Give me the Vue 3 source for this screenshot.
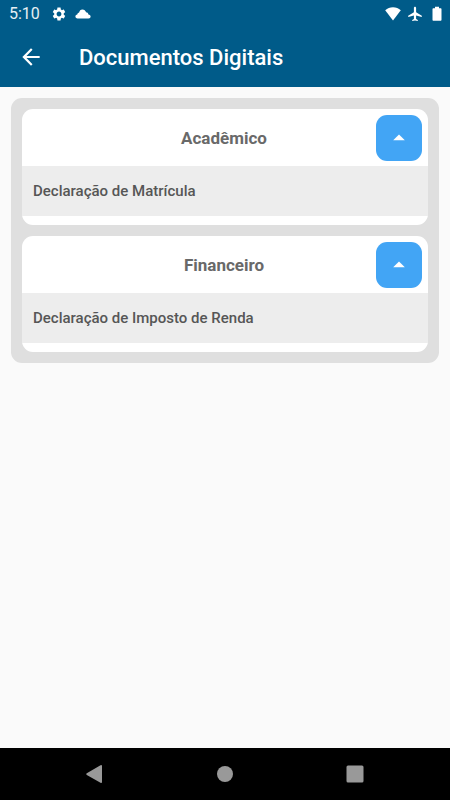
<script setup>
import { ref } from 'vue';

const sections = ref([
  { id: 'academico', title: 'Acadêmico', open: true, documents: ['Declaração de Matrícula'] },
  { id: 'financeiro', title: 'Financeiro', open: true, documents: ['Declaração de Imposto de Renda'] }
]);

function toggle(section) {
  section.open = !section.open;
}
</script>

<template>
  <div class="screen">
    <header class="top">
      <div class="status-bar">
        <span class="clock">5:10</span>
        <svg class="gear" width="16" height="16" viewBox="0 0 24 24" aria-hidden="true">
          <path d="M19.14 12.94c.04-.3.06-.61.06-.94 0-.32-.02-.64-.07-.94l2.03-1.58c.18-.14.23-.41.12-.61l-1.92-3.32c-.12-.22-.37-.29-.59-.22l-2.39.96c-.5-.38-1.03-.7-1.62-.94l-.36-2.54c-.04-.24-.24-.41-.48-.41h-3.84c-.24 0-.43.17-.47.41l-.36 2.54c-.59.24-1.13.57-1.62.94l-2.39-.96c-.22-.08-.47 0-.59.22L2.74 8.87c-.12.21-.08.47.12.61l2.03 1.58c-.05.3-.09.63-.09.94s.02.64.07.94l-2.03 1.58c-.18.14-.23.41-.12.61l1.92 3.32c.12.22.37.29.59.22l2.39-.96c.5.38 1.03.7 1.62.94l.36 2.54c.05.24.24.41.48.41h3.84c.24 0 .44-.17.47-.41l.36-2.54c.59-.24 1.13-.56 1.62-.94l2.39.96c.22.08.47 0 .59-.22l1.92-3.32c.12-.22.07-.47-.12-.61l-2.01-1.58zM12 15.6c-1.98 0-3.6-1.62-3.6-3.6s1.62-3.6 3.6-3.6 3.6 1.62 3.6 3.6-1.62 3.6-3.6 3.6z" />
        </svg>
        <svg class="cloud" width="16" height="10" viewBox="0 0 16 10" aria-hidden="true">
          <path d="M2.5 9.500C1.2 9.500.4 8.700.4 7.600c0-1.200.7-1.900 1.900-2.100C2.400 4.400 3 3.800 4 3.800 4.500 1.600 5.600.4 7.400.4c1.900 0 3.100 1.100 3.700 2.900 1.200.1 2.100.8 2.300 2.100 1.400.1 2.200.9 2.200 2.100 0 1.200-.8 2-2.100 2z" />
        </svg>
        <div class="indicators">
          <svg width="16" height="16" viewBox="0 0 16 16" aria-hidden="true">
            <path d="M8 1.200c3 0 5.600 1 7.800 3L8 14.500.2 4.200C2.400 2.200 5 1.200 8 1.200z" />
          </svg>
          <svg width="16" height="16" viewBox="0 0 16 16" aria-hidden="true">
            <path d="M8 .8c.7 0 1.100.6 1.100 1.300v4.200l5.700 3.400v1.400L9.100 9.500v3.400l1.700 1.200v1L8 14.400l-2.800.7v-1l1.700-1.200V9.500l-5.700 1.600V9.700l5.700-3.400V2.100C6.900 1.400 7.300.8 8 .8z" />
          </svg>
          <svg width="16" height="16" viewBox="0 0 16 16" aria-hidden="true">
            <path d="M6 .8h4v1.400h1.500c.6 0 1 .4 1 1v10.600c0 .6-.4 1-1 1h-7c-.6 0-1-.4-1-1V3.200c0-.6.4-1 1-1H6z" />
          </svg>
        </div>
      </div>
      <div class="app-bar">
        <button class="back" type="button" aria-label="Voltar">
          <svg width="26" height="26" viewBox="0 0 24 24">
            <path d="M20 11H7.83l5.59-5.59L12 4l-8 8 8 8 1.41-1.41L7.83 13H20v-2z" />
          </svg>
        </button>
        <h1>Documentos Digitais</h1>
      </div>
    </header>

    <main class="content">
      <div class="panel">
        <section v-for="section in sections" :key="section.id" class="card">
          <div class="card-header">
            <h2>{{ section.title }}</h2>
            <button
              class="toggle"
              :class="{ closed: !section.open }"
              type="button"
              :aria-label="section.title"
              :aria-expanded="section.open"
              @click="toggle(section)"
            >
              <svg width="28" height="28" viewBox="0 0 24 24">
                <path d="M7 14l5-5 5 5z" />
              </svg>
            </button>
          </div>
          <ul v-if="section.open" class="documents">
            <li v-for="doc in section.documents" :key="doc">
              <a href="#">{{ doc }}</a>
            </li>
          </ul>
        </section>
      </div>
    </main>

    <nav class="nav-bar">
      <button type="button" aria-label="Voltar">
        <svg width="20" height="20" viewBox="0 0 20 20">
          <path d="M17 2v16a1 1 0 0 1-1.500.8L1.800 10.900a1 1 0 0 1 0-1.700L15.500 1.200A1 1 0 0 1 17 2z" />
        </svg>
      </button>
      <button type="button" aria-label="Início">
        <svg width="20" height="20" viewBox="0 0 20 20">
          <circle cx="10" cy="10" r="8" />
        </svg>
      </button>
      <button type="button" aria-label="Recentes">
        <svg width="20" height="20" viewBox="0 0 20 20">
          <rect x="1.500" y="1.500" width="17" height="17" rx="1.500" />
        </svg>
      </button>
    </nav>
  </div>
</template>

<style>
body {
  margin: 0;
}
</style>

<style scoped>
.screen {
  display: flex;
  flex-direction: column;
  min-height: 100vh;
  background: #fafafa;
  font-family: Roboto, "Liberation Sans", sans-serif;
}

button {
  display: flex;
  align-items: center;
  justify-content: center;
  padding: 0;
  border: none;
  background: none;
  cursor: pointer;
}

svg {
  display: block;
  fill: currentColor;
}

.top {
  background: #005b89;
  color: #fff;
}

.status-bar {
  display: flex;
  align-items: center;
  height: 27px;
  padding: 0 5px 0 9px;
}

.clock {
  font-size: 16px;
  color: #e6eff4;
}

.gear {
  margin-left: 11px;
}

.cloud {
  margin-left: 8px;
}

.indicators {
  display: flex;
  align-items: center;
  gap: 6px;
  margin-left: auto;
}

.app-bar {
  display: flex;
  align-items: center;
  gap: 35px;
  height: 60px;
  padding: 0 18px;
}

.back {
  color: #fff;
}

h1 {
  margin: 0;
  font-size: 22px;
  font-weight: 500;
}

.content {
  flex: 1;
  padding: 11px;
}

.panel {
  display: flex;
  flex-direction: column;
  gap: 11px;
  padding: 11px;
  border-radius: 11px;
  background: #dfdfdf;
}

.card {
  padding-bottom: 9px;
  border-radius: 11px;
  background: #fff;
}

.card-header {
  display: flex;
  align-items: center;
  height: 57px;
  padding: 0 6px 0 50px;
}

h2 {
  flex: 1;
  margin: 0;
  font-size: 17px;
  font-weight: 700;
  text-align: center;
  color: #696969;
}

.toggle {
  width: 46px;
  height: 46px;
  border-radius: 11px;
  background: #42a5f5;
  color: #fff;
}

.toggle.closed svg {
  transform: rotate(180deg);
}

.documents {
  margin: 0;
  padding: 0;
  list-style: none;
}

.documents a {
  display: flex;
  align-items: center;
  height: 50px;
  padding: 0 11px;
  background: #ededed;
  font-size: 15px;
  font-weight: 500;
  color: #565656;
  text-decoration: none;
}

.nav-bar {
  display: flex;
  align-items: center;
  justify-content: center;
  gap: 110px;
  height: 52px;
  background: #000;
}

.nav-bar button {
  color: #999;
}
</style>
